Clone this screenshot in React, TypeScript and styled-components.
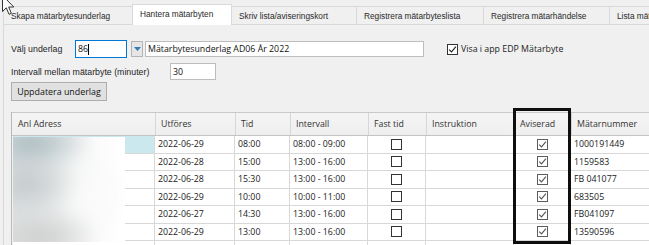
import React from 'react';
import styled, { createGlobalStyle } from 'styled-components';

const SANS = '"Liberation Sans", Arial, sans-serif';
const UI = '"Open Sans", "Noto Sans", sans-serif';

const GlobalStyle = createGlobalStyle`
  html, body { margin: 0; padding: 0; background: #f0f0f0; overflow: hidden; }
  #root { width: 649px; height: 245px; }
`;

const Window = styled.div`
  position: relative;
  width: 649px;
  height: 245px;
  overflow: hidden;
  background: #f0f0f0;
  display: flex;
  flex-direction: column;
`;

const TabStrip = styled.div`
  display: flex;
  align-items: flex-end;
  height: 24px;
  padding-left: 3px;
  flex-shrink: 0;
`;

const Tab = styled.div<{ $active?: boolean; $w: number; $first?: boolean }>`
  box-sizing: border-box;
  flex-shrink: 0;
  width: ${p => p.$w}px;
  height: ${p => (p.$active ? 21 : 18)}px;
  margin-bottom: ${p => (p.$active ? -1 : 0)}px;
  position: relative;
  z-index: ${p => (p.$active ? 2 : 1)};
  background: ${p => (p.$active ? '#ffffff' : '#f0f0f0')};
  border-top: 1px solid #d9d9d9;
  border-right: 1px solid #d9d9d9;
  border-left: ${p => (p.$active || p.$first ? '1px solid #d9d9d9' : 'none')};
  margin-left: ${p => (p.$active ? -1 : 0)}px;
  padding-left: 7px;
  display: flex;
  align-items: center;
  padding-bottom: ${p => (p.$active ? 2 : 0)}px;
  font-family: ${SANS};
  font-size: 8.3px;
  color: #2a2a2a;
  white-space: nowrap;
  overflow: hidden;
`;

const Panel = styled.div`
  flex: 1;
  margin-left: 3px;
  border-left: 1px solid #d9d9d9;
  border-top: 1px solid #d9d9d9;
  padding: 15px 0 0 7px;
  display: flex;
  flex-direction: column;
`;

const FormRow = styled.div<{ $mt?: number }>`
  display: flex;
  align-items: center;
  margin-top: ${p => p.$mt ?? 0}px;
`;

const Label = styled.div<{ $w: number }>`
  width: ${p => p.$w}px;
  flex-shrink: 0;
  font-family: ${SANS};
  font-size: 8.8px;
  color: #1e1e1e;
  white-space: nowrap;
`;

const TextBox = styled.div<{ $w: number; $h: number; $focus?: boolean; $ml?: number }>`
  box-sizing: border-box;
  width: ${p => p.$w}px;
  height: ${p => p.$h}px;
  margin-left: ${p => p.$ml ?? 0}px;
  flex-shrink: 0;
  background: #ffffff;
  border: 1px solid ${p => (p.$focus ? '#0078d7' : '#bdbdbd')};
  display: flex;
  align-items: center;
  padding-left: 2px;
  font-family: ${UI};
  font-size: 8.8px;
  color: #111;
  white-space: nowrap;
  overflow: hidden;
`;

const Caret = styled.span`
  display: inline-block;
  width: 1px;
  height: 11px;
  background: #000;
  margin-left: 0px;
`;

const DropButton = styled.div`
  box-sizing: border-box;
  width: 12px;
  height: 16px;
  margin-left: 4px;
  flex-shrink: 0;
  background: #e6e6e6;
  border: 1px solid #b4b4b4;
  display: flex;
  align-items: center;
  justify-content: center;
`;

const CheckWrap = styled.div<{ $ml?: number }>`
  display: flex;
  align-items: center;
  margin-left: ${p => p.$ml ?? 0}px;
  font-family: ${UI};
  font-size: 8.8px;
  color: #1e1e1e;
  white-space: nowrap;
  gap: 3px;
`;

const Box = styled.div<{ $tone?: 'dark' | 'grey' }>`
  box-sizing: border-box;
  width: 11px;
  height: 11px;
  flex-shrink: 0;
  background: #fff;
  border: 1px solid ${p => (p.$tone === 'grey' ? '#5c5c5c' : '#333333')};
  display: flex;
  align-items: center;
  justify-content: center;
`;

const Button = styled.div`
  box-sizing: border-box;
  width: 96px;
  height: 19px;
  margin-top: 2px;
  background: #e1e1e1;
  border: 1px solid #adadad;
  display: flex;
  align-items: center;
  justify-content: center;
  font-family: ${UI};
  font-size: 8.9px;
  color: #111;
`;

const Grid = styled.div`
  margin-top: 11px;
  border-left: 1px solid #b9b9b9;
  padding-left: 1px;
  width: 700px;
  display: flex;
  flex-direction: column;
`;

const HeaderRow = styled.div`
  display: flex;
  height: 24px;
  box-sizing: border-box;
  border-top: 1px solid #c9c9c9;
  border-bottom: 1px solid #c4c4c4;
  background: linear-gradient(#f4f4f4, #efefef);
  margin-left: -1px;
  padding-left: 1px;
`;

const HeadCell = styled.div<{ $w: number }>`
  box-sizing: border-box;
  width: ${p => p.$w}px;
  flex-shrink: 0;
  border-right: 1px solid #d6d6d6;
  padding-left: 5px;
  display: flex;
  align-items: center;
  font-family: ${UI};
  font-size: 8.8px;
  color: #333;
  white-space: nowrap;
`;

const BodyRow = styled.div`
  display: flex;
  height: 17.5px;
`;

const Cell = styled.div<{ $w: number; $center?: boolean; $sel?: boolean }>`
  box-sizing: border-box;
  width: ${p => p.$w}px;
  flex-shrink: 0;
  border-right: 1px solid #d8d8d8;
  border-bottom: 1px solid #d8d8d8;
  background: ${p => (p.$sel ? '#cce8ef' : '#ffffff')};
  padding-left: ${p => (p.$center ? 0 : 3)}px;
  display: flex;
  align-items: center;
  justify-content: ${p => (p.$center ? 'center' : 'flex-start')};
  font-family: ${UI};
  font-size: 8.8px;
  color: #1a1a1a;
  white-space: nowrap;
  overflow: hidden;
`;

const Redaction = styled.div`
  position: absolute;
  left: 13px;
  top: 137px;
  width: 112px;
  height: 105px;
  overflow: hidden;
  background: linear-gradient(90deg, #e2e6e7 0%, #eef0f0 45%, #fbfbfb 75%, #ffffff 100%);
`;

const Smudge = styled.div`
  position: absolute;
  inset: -10px;
  filter: blur(7px);
  background:
    radial-gradient(ellipse 45% 22% at 22% 12%, #a9babf 0%, rgba(169,186,191,0) 100%),
    radial-gradient(ellipse 40% 30% at 18% 45%, #c4c9cb 0%, rgba(196,201,203,0) 100%),
    radial-gradient(ellipse 45% 25% at 28% 88%, #cdcdcd 0%, rgba(205,205,205,0) 100%),
    radial-gradient(ellipse 30% 30% at 65% 55%, #fafafa 0%, rgba(250,250,250,0) 100%);
`;

const Highlight = styled.div`
  position: absolute;
  left: 513px;
  top: 108px;
  width: 58px;
  height: 136px;
  box-sizing: border-box;
  border: 3px solid #0e0e0e;
  pointer-events: none;
`;

const Cursor = styled.svg`
  position: absolute;
  left: 2px;
  top: -5px;
  z-index: 5;
`;

const cols = [142, 80, 55, 78, 58, 88, 57, 110];
const headers = ['Anl Adress', 'Utföres', 'Tid', 'Intervall', 'Fast tid', 'Instruktion', 'Aviserad', 'Mätarnummer'];

const rows = [
  ['2022-06-29', '08:00', '08:00 - 09:00', '1000191449'],
  ['2022-06-28', '15:00', '13:00 - 16:00', '1159583'],
  ['2022-06-28', '15:30', '13:00 - 16:00', 'FB 041077'],
  ['2022-06-29', '10:00', '10:00 - 11:00', '683505'],
  ['2022-06-27', '14:30', '13:00 - 16:00', 'FB041097'],
  ['2022-06-29', '13:00', '13:00 - 16:00', '13590596'],
];

const tabs = [
  { t: 'Skapa mätarbytesunderlag', w: 130 },
  { t: 'Hantera mätarbyten', w: 100, active: true },
  { t: 'Skriv lista/aviseringskort', w: 125 },
  { t: 'Registrera mätarbyteslista', w: 127 },
  { t: 'Registrera mätarhändelse', w: 126 },
  { t: 'Lista mätarbyten', w: 80 },
];

const Check = ({ color }: { color: string }) => (
  <svg width="9" height="9" viewBox="0 0 9 9">
    <path d="M1.2 4.6 L3.5 6.9 L7.9 1.6" fill="none" stroke={color} strokeWidth="1.1" />
  </svg>
);

export default function App() {
  return (
    <>
      <GlobalStyle />
      <Window>
        <TabStrip>
          {tabs.map((t, i) => (
            <Tab key={t.t} $w={t.w} $active={t.active} $first={i === 0}>
              {t.t}
            </Tab>
          ))}
        </TabStrip>
        <Panel>
          <FormRow>
            <Label $w={64}>Välj underlag</Label>
            <TextBox $w={52} $h={18} $focus>
              86<Caret />
            </TextBox>
            <DropButton>
              <svg width="7" height="4" viewBox="0 0 7 4">
                <path d="M0 0 L7 0 L3.5 4 Z" fill="#2f7db3" />
              </svg>
            </DropButton>
            <TextBox $w={279} $h={16} $ml={2}>Mätarbytesunderlag AD06 År 2022</TextBox>
            <CheckWrap $ml={23}>
              <Box>
                <Check color="#222" />
              </Box>
              Visa i app EDP Mätarbyte
            </CheckWrap>
          </FormRow>
          <FormRow $mt={5}>
            <Label $w={159}>Intervall mellan mätarbyte (minuter)</Label>
            <TextBox $w={46} $h={17}>30</TextBox>
          </FormRow>
          <Button>Uppdatera underlag</Button>
          <Grid>
            <HeaderRow>
              {headers.map((h, i) => (
                <HeadCell key={h} $w={cols[i] + (i === 0 ? 1 : 0)}>
                  {h}
                </HeadCell>
              ))}
            </HeaderRow>
            {rows.map((r, ri) => (
              <BodyRow key={ri}>
                <Cell $w={cols[0]} $sel={ri === 0} />
                <Cell $w={cols[1]}>{r[0]}</Cell>
                <Cell $w={cols[2]}>{r[1]}</Cell>
                <Cell $w={cols[3]}>{r[2]}</Cell>
                <Cell $w={cols[4]} $center>
                  <Box />
                </Cell>
                <Cell $w={cols[5]} />
                <Cell $w={cols[6]} $center>
                  <Box $tone="grey">
                    <Check color="#555" />
                  </Box>
                </Cell>
                <Cell $w={cols[7]}>{r[3]}</Cell>
              </BodyRow>
            ))}
            <BodyRow>
              {cols.map((w, i) => (
                <Cell key={i} $w={w} />
              ))}
            </BodyRow>
          </Grid>
        </Panel>
        <Redaction>
          <Smudge />
        </Redaction>
        <Highlight />
        <Cursor width="13" height="21" viewBox="0 0 13 21">
          <path d="M0.5 0.5 L0.5 16.5 L4.3 12.8 L7 19.3 L9.3 18.3 L6.7 12 L11.8 12 Z" fill="#fff" stroke="#333" strokeWidth="1" />
        </Cursor>
      </Window>
    </>
  );
}
